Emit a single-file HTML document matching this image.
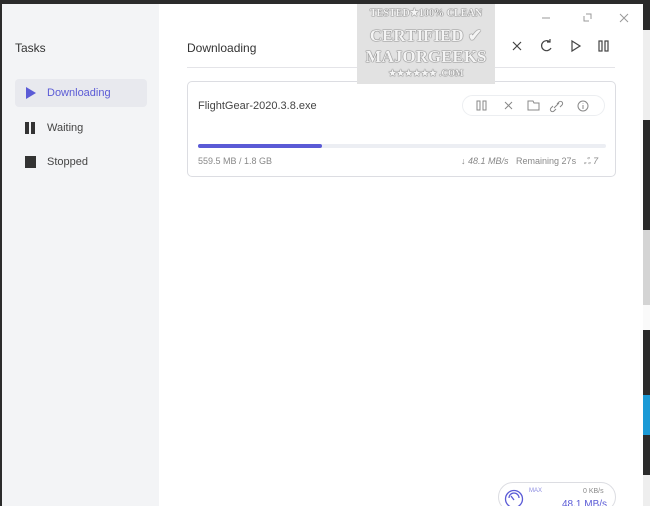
<!DOCTYPE html>
<html><head><style>
*{margin:0;padding:0;box-sizing:border-box}
html,body{width:650px;height:506px;overflow:hidden}
body{background:#2b2b2b;font-family:"Liberation Sans",sans-serif;position:relative}
.win{position:absolute;left:2px;top:4px;width:641px;height:502px;background:#fff;overflow:hidden}
.side{position:absolute;left:0;top:0;width:157px;height:502px;background:#f3f4f6}
.t{position:absolute;font-size:12px;color:#333;white-space:nowrap}
.item{position:absolute;left:13px;width:132px;height:28px;border-radius:4px;font-size:11px;color:#444}
.item span{position:absolute;left:32px;top:8px}
.strip{position:absolute;left:643px;width:7px}
.wm{position:absolute;left:355px;top:0;width:138px;height:80px;background:#e2e2e2;font-family:'Liberation Serif',serif;font-weight:bold;color:#f4f4f4;text-align:center;white-space:nowrap;text-shadow:0 0 1px #555,0 0 1px #555;overflow:hidden}
</style></head><body>
<div class="strip" style="top:0;height:30px;background:#2b2b2b"></div>
<div class="strip" style="top:30px;height:90px;background:#eee"></div>
<div class="strip" style="top:120px;height:110px;background:#2b2b2b"></div>
<div class="strip" style="top:230px;height:75px;background:#d4d4d4"></div>
<div class="strip" style="top:305px;height:25px;background:#fafafa"></div>
<div class="strip" style="top:330px;height:65px;background:#2b2b2b"></div>
<div class="strip" style="top:395px;height:40px;background:#1b9ad6"></div>
<div class="strip" style="top:435px;height:40px;background:#2b2b2b"></div>
<div class="strip" style="top:475px;height:31px;background:#eee"></div>
<div class="win">
<div class="side">
<div class="t" style="left:13px;top:37px">Tasks</div>
<div class="item" style="top:75px;background:#e8e9ee;color:#5b5bd6"><svg style="position:absolute;left:11px;top:8px" width="10" height="12"><path d="M0 0L10 6L0 12Z" fill="#5b5bd6"/></svg><span>Downloading</span></div>
<div class="item" style="top:110px"><svg style="position:absolute;left:10px;top:8px" width="11" height="12"><rect x="0" y="0" width="4" height="12" fill="#333"/><rect x="6" y="0" width="4" height="12" fill="#333"/></svg><span>Waiting</span></div>
<div class="item" style="top:144px"><svg style="position:absolute;left:10px;top:8px" width="12" height="12"><rect width="11" height="12" fill="#333"/></svg><span>Stopped</span></div>
</div>
<div class="t" style="left:185px;top:37px">Downloading</div>
<svg style="position:absolute;left:500px;top:32px" width="120" height="18" fill="none" stroke="#444" stroke-width="1.2">
<path d="M11 6L19 14M19 6L11 14"/>
<path d="M48 6A5 5 0 1 0 49 12M48 3V6H45"/>
<path d="M70 5L78 10L70 15Z"/>
<rect x="97" y="5" width="3" height="10"/><rect x="103" y="5" width="3" height="10"/>
</svg>
<svg style="position:absolute;left:530px;top:6px" width="100" height="16" fill="none" stroke="#999" stroke-width="1">
<path d="M10 8H18"/><path d="M52 6V11H57M54 4H59V9"/><path d="M88 4L96 12M96 4L88 12"/>
</svg>
<div style="position:absolute;left:185px;top:63px;width:428px;height:1px;background:#e4e4e8"></div>
<div style="position:absolute;left:185px;top:77px;width:429px;height:96px;border:1px solid #dcdde2;border-radius:5px">
<div class="t" style="left:10px;top:18px;font-size:11px;color:#444">FlightGear-2020.3.8.exe</div>
<div style="position:absolute;left:274px;top:13px;width:143px;height:21px;border:1px solid #eceef1;border-radius:11px"></div>
<svg style="position:absolute;left:285px;top:16px" width="130" height="16" fill="none" stroke="#888" stroke-width="1">
<rect x="4" y="3" width="3" height="9"/><rect x="10" y="3" width="3" height="9"/>
<path d="M32 4L39 11M39 4L32 11"/>
<path d="M55 3H60L61 5H66V12H55Z"/>
<path d="M81 10L86 5M80 8L78 10A2 2 0 0 0 81 13L83 11M84 6L86 4A2 2 0 0 1 89 7L87 9"/>
<circle cx="110" cy="8" r="5"/><path d="M110 7V11M110 5V5.5"/>
</svg>
<div style="position:absolute;left:10px;top:62px;width:408px;height:4px;border-radius:2px;background:#eceef3"></div>
<div style="position:absolute;left:10px;top:62px;width:124px;height:4px;border-radius:2px;background:#5b5bd6"></div>
<div class="t" style="left:10px;top:74px;font-size:9px;color:#888">559.5 MB / 1.8 GB</div>
<div class="t" style="left:273px;top:74px;font-size:9px;color:#888"><i>↓ 48.1 MB/s</i>&nbsp;&nbsp;&nbsp;Remaining 27s&nbsp;&nbsp;&nbsp;<i>ஃ 7</i></div>
</div>
<div style="position:absolute;left:496px;top:478px;width:118px;height:30px;border:1px solid #dcdde2;border-radius:15px">
<svg style="position:absolute;left:5px;top:6px" width="20" height="20" fill="none" stroke="#5b5bd6" stroke-width="1.3"><circle cx="10" cy="10" r="8.5"/><path d="M5 9A5 5 0 0 1 15 9"/><path d="M7 7L10 11"/></svg>
<div class="t" style="left:30px;top:5px;font-size:6px;color:#8b8be0">MAX</div>
<div class="t" style="left:84px;top:5px;font-size:7px;color:#888">0 KB/s</div>
<div class="t" style="left:63px;top:16px;font-size:10px;color:#5b5bd6">48.1 MB/s</div>
</div>
<div class="wm">
<div style="font-size:11px;line-height:16px;margin-top:1px;transform:scaleX(.92)">TESTED★100% CLEAN</div>
<div style="font-size:17px;line-height:22px;margin-top:4px">CERTIFIED ✔</div>
<div style="font-size:17px;line-height:20px">MAJORGEEKS</div>
<div style="font-size:9px;line-height:12px">★★★★★★ .COM</div>
</div>
</div>
</body></html>
